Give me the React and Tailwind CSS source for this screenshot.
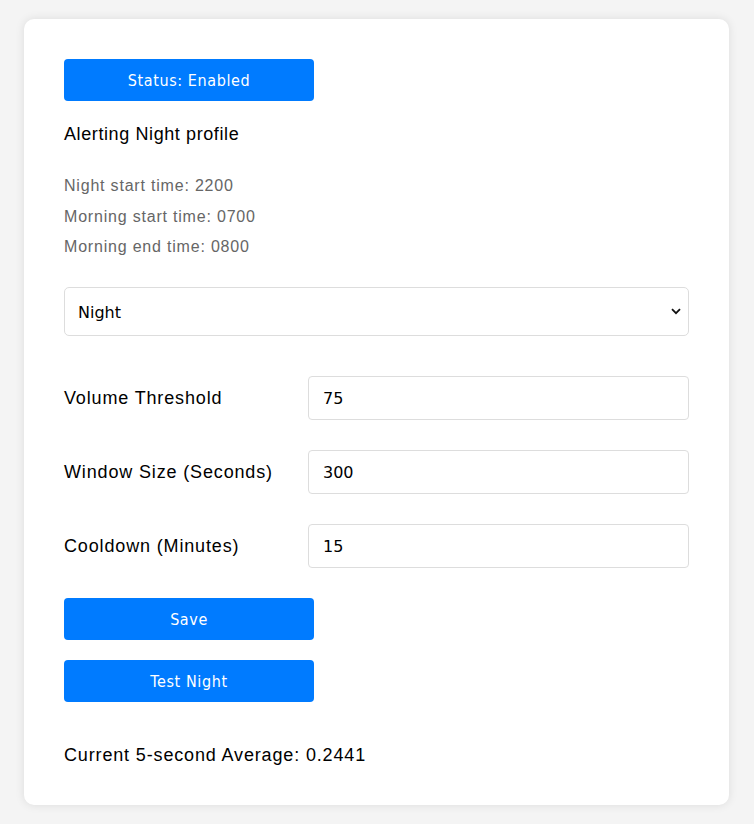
export default function App() {
  const rows = [
    { label: 'Volume Threshold', value: '75' },
    { label: 'Window Size (Seconds)', value: '300' },
    { label: 'Cooldown (Minutes)', value: '15' },
  ];

  const btn =
    "block w-[250px] h-[42px] bg-[#007bff] text-white rounded-[4px] text-[16px] tracking-[0.6px] pt-[2px] font-['DejaVu_Sans_Condensed','DejaVu_Sans',sans-serif]";

  return (
    <div className="min-h-[824px] bg-[#f4f4f4] px-[24px] pt-[19px] pb-[20px] font-['Liberation_Sans',Arial,sans-serif]">
      <div className="bg-white rounded-[10px] shadow-[0_0_10px_rgba(0,0,0,0.1)] w-[705px] px-[40px] pt-[40px] pb-[38px]">
        <button className={btn}>Status: Enabled</button>

        <h2 className="mt-[21px] text-[18px] leading-[24px] tracking-[0.6px] text-black">Alerting Night profile</h2>

        <div className="mt-[25px] text-[16px] leading-[30.5px] tracking-[0.8px] text-[#666]">
          <p>Night start time: 2200</p>
          <p>Morning start time: 0700</p>
          <p>Morning end time: 0800</p>
        </div>

        <div className="relative mt-[24px]">
          <select
            defaultValue="night"
            className="block w-full h-[49px] appearance-none border border-[#ddd] rounded-[5px] bg-white pl-[13px] pr-[30px] pt-[3px] text-[16px] text-black font-['DejaVu_Sans',sans-serif] outline-none"
          >
            <option value="night">Night</option>
            <option value="morning">Morning</option>
          </select>
          <svg
            className="pointer-events-none absolute right-[8px] top-[21px]"
            width="10"
            height="7"
            viewBox="0 0 10 7"
            fill="none"
          >
            <path d="M1 1.2L5 5.2L9 1.2" stroke="#111" strokeWidth="1.8" />
          </svg>
        </div>

        <div className="mt-[40px] flex flex-col gap-[30px]">
          {rows.map((r) => (
            <div key={r.label} className="flex items-center">
              <label className="w-[244px] text-[18px] tracking-[0.85px] pt-[1px] text-black">{r.label}</label>
              <input
                defaultValue={r.value}
                className="flex-1 h-[44px] border border-[#ddd] rounded-[4px] px-[14px] pt-[1px] text-[16px] text-black font-['DejaVu_Sans',sans-serif] outline-none"
              />
            </div>
          ))}
        </div>

        <div className="mt-[30px] flex flex-col gap-[20px]">
          <button className={btn}>Save</button>
          <button className={btn}>Test Night</button>
        </div>

        <p className="mt-[41px] text-[18px] leading-[24px] tracking-[0.85px] text-black">Current 5-second Average: 0.2441</p>
      </div>
    </div>
  );
}
